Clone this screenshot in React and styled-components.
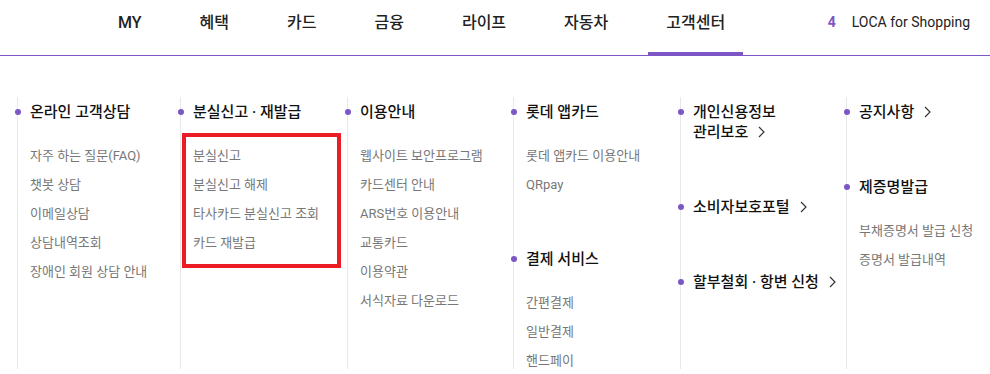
import React from "react";
import styled, { createGlobalStyle } from "styled-components";

const PURPLE = "#7b56c4";

const Global = createGlobalStyle`
  html, body { margin: 0; padding: 0; background: #fff; }
  body { font-family: Roboto, "Noto Sans CJK KR", sans-serif; color: #111; }
  * { box-sizing: border-box; }
`;

const Page = styled.div`
  width: 990px;
  height: 374px;
  overflow: hidden;
  background: #fff;
`;

const NavBar = styled.div`
  display: flex;
  align-items: stretch;
  height: 56px;
  border-bottom: 1px solid ${PURPLE};
  padding-left: 100px;
  padding-right: 20px;
`;

const Tabs = styled.ul`
  display: flex;
  gap: 22px;
  list-style: none;
  margin: 0;
  padding: 0;
`;

const Tab = styled.li`
  position: relative;
  padding: 0 18px;
  display: flex;
  align-items: flex-start;
  padding-top: 13px;
  font-size: 16px;
  font-weight: 500;
  color: #222;
  line-height: 20px;
  &::after {
    content: "";
    display: ${(p) => (p.$active ? "block" : "none")};
    position: absolute;
    left: 0;
    right: 0;
    bottom: -1px;
    height: 4px;
    background: ${PURPLE};
  }
`;

const Side = styled.div`
  margin-left: auto;
  display: flex;
  gap: 16px;
  padding-top: 13px;
  font-size: 14px;
  line-height: 18px;
  color: #222;
`;

const Count = styled.span`
  color: ${PURPLE};
  font-weight: 700;
`;

const Panel = styled.div`
  display: grid;
  grid-template-columns: 163px 167px 166px 167px 166px 1fr;
  padding: 41px 0 0 17px;
`;

const Column = styled.div`
  border-left: 1px solid #e8e8e8;
  padding: 5px 0 0 12px;
  height: 272px;
`;

const Group = styled.div`
  margin-bottom: 55px;
`;

const Title = styled.div`
  position: relative;
  font-size: 15px;
  font-weight: 500;
  line-height: 20px;
  color: #111;
  &::before {
    content: "";
    position: absolute;
    left: -15.5px;
    top: 7px;
    width: 6px;
    height: 6px;
    border-radius: 50%;
    background: ${PURPLE};
  }
`;

const Chevron = styled.svg`
  margin-left: 10px;
  vertical-align: -1px;
`;

const Items = styled.ul`
  position: relative;
  list-style: none;
  margin: 0;
  padding: 14px 0 0;
  &::after {
    content: "";
    display: ${(p) => (p.$marked ? "block" : "none")};
    position: absolute;
    left: -11px;
    top: 11px;
    width: 151px;
    height: 127px;
    border: 4px solid #ec1c24;
  }
`;

const Item = styled.li`
  margin-top: 10px;
  font-size: 13px;
  line-height: 19px;
  color: #777;
`;

const Arrow = () => (
  <Chevron width="7" height="12" viewBox="0 0 7 12">
    <path d="M1 1 L6 6 L1 11" fill="none" stroke="#333" strokeWidth="1.2" />
  </Chevron>
);

const tabs = ["MY", "혜택", "카드", "금융", "라이프", "자동차", "고객센터"];

const columns = [
  [{ title: "온라인 고객상담", items: ["자주 하는 질문(FAQ)", "챗봇 상담", "이메일상담", "상담내역조회", "장애인 회원 상담 안내"] }],
  [{ title: "분실신고 · 재발급", marked: true, items: ["분실신고", "분실신고 해제", "타사카드 분실신고 조회", "카드 재발급"] }],
  [{ title: "이용안내", items: ["웹사이트 보안프로그램", "카드센터 안내", "ARS번호 이용안내", "교통카드", "이용약관", "서식자료 다운로드"] }],
  [
    { title: "롯데 앱카드", items: ["롯데 앱카드 이용안내", "QRpay"] },
    { title: "결제 서비스", items: ["간편결제", "일반결제", "핸드페이"] },
  ],
  [
    { title: ["개인신용정보", "관리보호"], arrow: true },
    { title: "소비자보호포털", arrow: true },
    { title: "할부철회 · 항변 신청", arrow: true },
  ],
  [
    { title: "공지사항", arrow: true },
    { title: "제증명발급", items: ["부채증명서 발급 신청", "증명서 발급내역"] },
  ],
];

export default function App() {
  return (
    <Page>
      <Global />
      <NavBar>
        <Tabs>
          {tabs.map((t) => (
            <Tab key={t} $active={t === "고객센터"}>{t}</Tab>
          ))}
        </Tabs>
        <Side>
          <Count>4</Count>
          <span>LOCA for Shopping</span>
        </Side>
      </NavBar>
      <Panel>
        {columns.map((groups, ci) => (
          <Column key={ci}>
            {groups.map((g, gi) => (
              <Group key={gi}>
                <Title>
                  {Array.isArray(g.title) ? (
                    <>
                      {g.title[0]}
                      <br />
                      {g.title[1]}
                    </>
                  ) : (
                    g.title
                  )}
                  {g.arrow && <Arrow />}
                </Title>
                {g.items && (
                  <Items $marked={g.marked}>
                    {g.items.map((it) => (
                      <Item key={it}>{it}</Item>
                    ))}
                  </Items>
                )}
              </Group>
            ))}
          </Column>
        ))}
      </Panel>
    </Page>
  );
}
